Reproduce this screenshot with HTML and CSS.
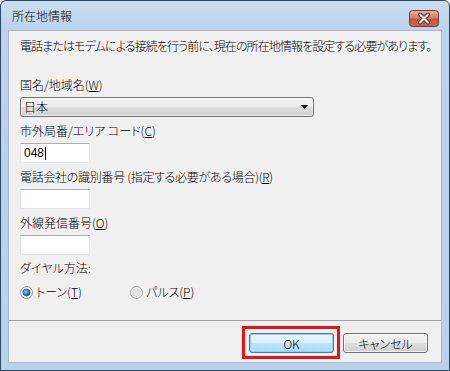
FILE: index.html
```html
<!DOCTYPE html>
<html lang="ja">
<head>
    <meta charset="UTF-8">
    <meta name="viewport" content="width=device-width, initial-scale=1.0">
    <title>所在地情報</title>
    <link rel="stylesheet" href="styles.css">
</head>
<body>
    <div class="window">
        <!-- Title bar -->
        <div class="titlebar">
            <span class="title">所在地情報</span>
            <span class="close">
                <svg width="30" height="17" viewBox="0 0 30 17">
                    <defs>
                        <linearGradient id="closeBg" x1="0" y1="0" x2="0" y2="1">
                            <stop offset="0" stop-color="#e9b1a3"/>
                            <stop offset="0.45" stop-color="#d77d67"/>
                            <stop offset="0.55" stop-color="#c9553a"/>
                            <stop offset="1" stop-color="#cf6a4c"/>
                        </linearGradient>
                    </defs>
                    <rect x="0.5" y="0.5" width="29" height="16" rx="3" fill="url(#closeBg)" stroke="#6f3b33"/>
                    <path d="M11 4.5 L19 12.5 M19 4.5 L11 12.5" stroke="#5a2a22" stroke-width="4" stroke-linecap="round"/>
                    <path d="M11 4.5 L19 12.5 M19 4.5 L11 12.5" stroke="#ffffff" stroke-width="2" stroke-linecap="round"/>
                </svg>
            </span>
        </div>

        <div class="client">
            <div class="form">
                <p class="intro">電話またはモデムによる接続を行う前に、現在の所在地情報を設定する必要があります。</p>

                <div class="label label-first">国名/地域名(<u>W</u>)</div>
                <div class="select">
                    <span>日本</span>
                    <svg class="arrow" width="7" height="4" viewBox="0 0 7 4"><path d="M0 0 H7 L3.5 4 Z" fill="#000"/></svg>
                </div>

                <div class="label">市外局番/エリア コード(<u>C</u>)</div>
                <div class="textbox"><span class="value">048</span><span class="caret"></span></div>

                <div class="label label-long">電話会社の識別番号 (指定する必要がある場合)(<u>R</u>)</div>
                <div class="textbox"></div>

                <div class="label">外線発信番号(<u>O</u>)</div>
                <div class="textbox"></div>

                <div class="label label-dial">ダイヤル方法:</div>
                <div class="radios">
                    <span class="radio radio-tone">
                        <svg width="13" height="13" viewBox="0 0 13 13">
                            <defs>
                                <linearGradient id="rbg" x1="0" y1="0" x2="1" y2="1">
                                    <stop offset="0" stop-color="#e6e6e6"/>
                                    <stop offset="1" stop-color="#ffffff"/>
                                </linearGradient>
                                <radialGradient id="rdot" cx="0.4" cy="0.4" r="0.6">
                                    <stop offset="0" stop-color="#a9d6f5"/>
                                    <stop offset="0.5" stop-color="#3b84c4"/>
                                    <stop offset="1" stop-color="#1b4f86"/>
                                </radialGradient>
                            </defs>
                            <circle cx="6.5" cy="6.5" r="6" fill="url(#rbg)" stroke="#8e8f8f"/>
                            <circle cx="6.5" cy="6.5" r="3.6" fill="url(#rdot)" stroke="#2a5f94" stroke-width="0.6"/>
                        </svg>
                        <span>トーン(<u>T</u>)</span>
                    </span>
                    <span class="radio">
                        <svg width="13" height="13" viewBox="0 0 13 13">
                            <circle cx="6.5" cy="6.5" r="6" fill="url(#rbg)" stroke="#a4a4a4"/>
                            <circle cx="6.5" cy="6.5" r="3.8" fill="#e4e4e4" stroke="#cfcfcf" stroke-width="0.6"/>
                        </svg>
                        <span>パルス(<u>P</u>)</span>
                    </span>
                </div>
            </div>

            <div class="footer">
                <button class="btn btn-default highlight">OK</button>
                <button class="btn">キャンセル</button>
            </div>
        </div>
    </div>
</body>
</html>
```

FILE: styles.css
```css
body {
    margin: 0;
    background: #ffffff;
    font-family: "Meiryo UI", "Noto Sans CJK JP", sans-serif;
    font-size: 12px;
    font-weight: 300;
    color: #000;
}
.window {
    box-sizing: border-box;
    width: 450px;
    height: 371px;
    border: 1px solid #2c4866;
    border-radius: 6px 6px 0 0;
    background: linear-gradient(#cadcef 0px, #bcd3eb 30px, #bad1ea 100%);
    display: flex;
    flex-direction: column;
}
.titlebar {
    height: 29px;
    display: flex;
    align-items: flex-start;
    justify-content: space-between;
    padding: 0 10px 0 11px;
    box-sizing: border-box;
}
.title {
    margin-top: 7px;
    line-height: 16px;
    font-feature-settings: "palt";
}
.close {
    margin-top: 9px;
    line-height: 0;
}
.client {
    flex: 1;
    margin: 0 7px 7px;
    background: #f0f0f0;
    border: 1px solid #a6bad2;
    display: flex;
    flex-direction: column;
}
.form {
    flex: 1;
    padding: 7px 11px 0;
    display: flex;
    flex-direction: column;
    align-items: flex-start;
}
.intro {
    margin: 0;
    line-height: 16px;
    white-space: nowrap;
    font-feature-settings: "palt";
    letter-spacing: -0.9px;
}
.label {
    line-height: 16px;
    margin-top: 6px;
    margin-bottom: 4px;
    font-feature-settings: "palt";
}
.label-long { letter-spacing: -0.3px; }
.label-first { margin-top: 23px; }
.label-dial { margin-top: 5px; margin-bottom: 8px; }
u { text-underline-offset: 1px; }
.select {
    box-sizing: border-box;
    width: 294px;
    height: 20px;
    border: 1px solid #707070;
    border-radius: 3px;
    background: linear-gradient(#f4f4f4 0%, #ececec 50%, #dedede 50%, #d0d0d0 100%);
    box-shadow: inset 0 0 0 1px rgba(255, 255, 255, 0.6);
    display: flex;
    align-items: center;
    justify-content: space-between;
    padding: 0 5px 0 3px;
}
.select span { line-height: 16px; }
.textbox {
    box-sizing: border-box;
    width: 70px;
    height: 20px;
    background: #fff;
    border: 1px solid #e3e9ef;
    border-top-color: #abadb3;
    display: flex;
    align-items: center;
    padding-left: 3px;
}
.textbox .value {
    font-family: "Liberation Sans", sans-serif;
    font-size: 12px;
    font-weight: 400;
}
.caret {
    width: 1px;
    height: 13px;
    background: #000;
    margin-left: 1px;
}
.radios {
    display: flex;
    align-items: center;
}
.radio {
    display: inline-flex;
    align-items: center;
    gap: 3px;
    line-height: 16px;
    font-feature-settings: "palt";
}
.radio-tone { width: 110px; }
.footer {
    border-top: 1px solid #a0a0a0;
    padding: 12px 13px 9px;
    display: flex;
    justify-content: flex-end;
    gap: 9px;
}
.btn {
    box-sizing: border-box;
    width: 85px;
    height: 20px;
    padding: 0;
    font-family: inherit;
    font-size: 12px;
    font-weight: 300;
    color: #000;
    border: 1px solid #707070;
    border-radius: 3px;
    background: linear-gradient(#f2f2f2 0%, #ebebeb 50%, #dddddd 50%, #cfcfcf 100%);
    box-shadow: inset 0 0 0 1px rgba(255, 255, 255, 0.7);
    font-feature-settings: "palt";
}
.btn-default {
    border-color: #3c7fb1;
    background: linear-gradient(#eaf6fd 0%, #d9f0fc 50%, #bee6fd 50%, #a7d9f5 100%);
    box-shadow: inset 0 0 0 1px #8fd0f3;
}
/* red annotation frame drawn over the OK button */
.highlight { position: relative; overflow: visible; }
.highlight::after {
    content: "";
    position: absolute;
    top: -8px;
    right: -7px;
    bottom: -7px;
    left: -8px;
    border: 3px solid #ee1111;
    pointer-events: none;
}
```
